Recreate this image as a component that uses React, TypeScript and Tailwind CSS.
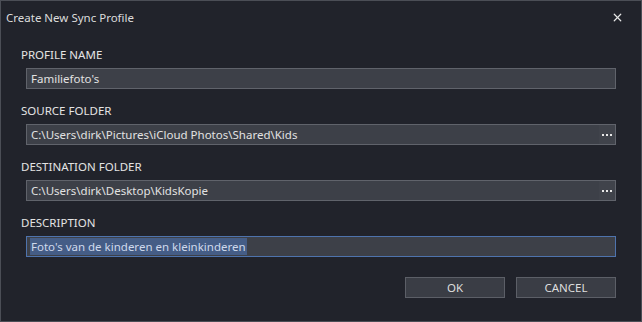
import { X } from "lucide-react";

const FIELDS = [
  { label: "PROFILE NAME", value: "Familiefoto's", browse: false },
  { label: "SOURCE FOLDER", value: "C:\\Users\\dirk\\Pictures\\iCloud Photos\\Shared\\Kids", browse: true },
  { label: "DESTINATION FOLDER", value: "C:\\Users\\dirk\\Desktop\\KidsKopie", browse: true },
];

function Dots() {
  return (
    <div className="flex h-full w-[16px] items-center justify-center gap-[2px] bg-[#40434b]">
      <span className="h-[2px] w-[2px] bg-[#e8e8e8]" />
      <span className="h-[2px] w-[2px] bg-[#e8e8e8]" />
      <span className="h-[2px] w-[2px] bg-[#e8e8e8]" />
    </div>
  );
}

export default function App() {
  return (
    <div
      className="flex h-[322px] w-[642px] flex-col border border-[#4b4e56] bg-[#21232b] text-[11.5px] text-[#e4e4e4]"
      style={{ fontFamily: '"Noto Sans", "Open Sans", sans-serif' }}
    >
      {/* title bar */}
      <div className="flex h-[33px] shrink-0 items-center justify-between pl-[5px] pr-[17px]">
        <span className="text-[#dcdcdc]">Create New Sync Profile</span>
        <X size={13} strokeWidth={2.25} className="text-[#e6e6e6]" />
      </div>

      <div className="flex flex-col pl-[20px] pt-[13px]">
        {FIELDS.map((f) => (
          <div key={f.label} className="mb-[14px] flex flex-col">
            <div className="h-[16px] leading-[16px]">{f.label}</div>
            <div className="ml-[5px] mt-[5px] flex h-[21px] w-[590px] items-center border border-[#60636b] bg-[#3d4048]">
              <span className="flex-1 truncate pl-[4px] text-[#e2e2e2]">{f.value}</span>
              {f.browse && <Dots />}
            </div>
          </div>
        ))}

        <div className="flex flex-col">
          <div className="h-[16px] leading-[16px]">DESCRIPTION</div>
          <div className="ml-[5px] mt-[5px] flex h-[21px] w-[590px] items-center border border-[#4e73ad] bg-[#3d4048] pl-[3px]">
            <span className="bg-[#455d86] px-[1px] leading-[17px] text-[#cfd9ec]">
              Foto's van de kinderen en kleinkinderen
            </span>
          </div>
        </div>

        <div className="mt-[20px] flex justify-end gap-[11px] pr-[25px]">
          <button className="h-[21px] w-[100px] border border-[#5c5f67] bg-[#3a3d45] text-[#dedede]">OK</button>
          <button className="h-[21px] w-[100px] border border-[#5c5f67] bg-[#3a3d45] text-[#dedede]">CANCEL</button>
        </div>
      </div>
    </div>
  );
}
